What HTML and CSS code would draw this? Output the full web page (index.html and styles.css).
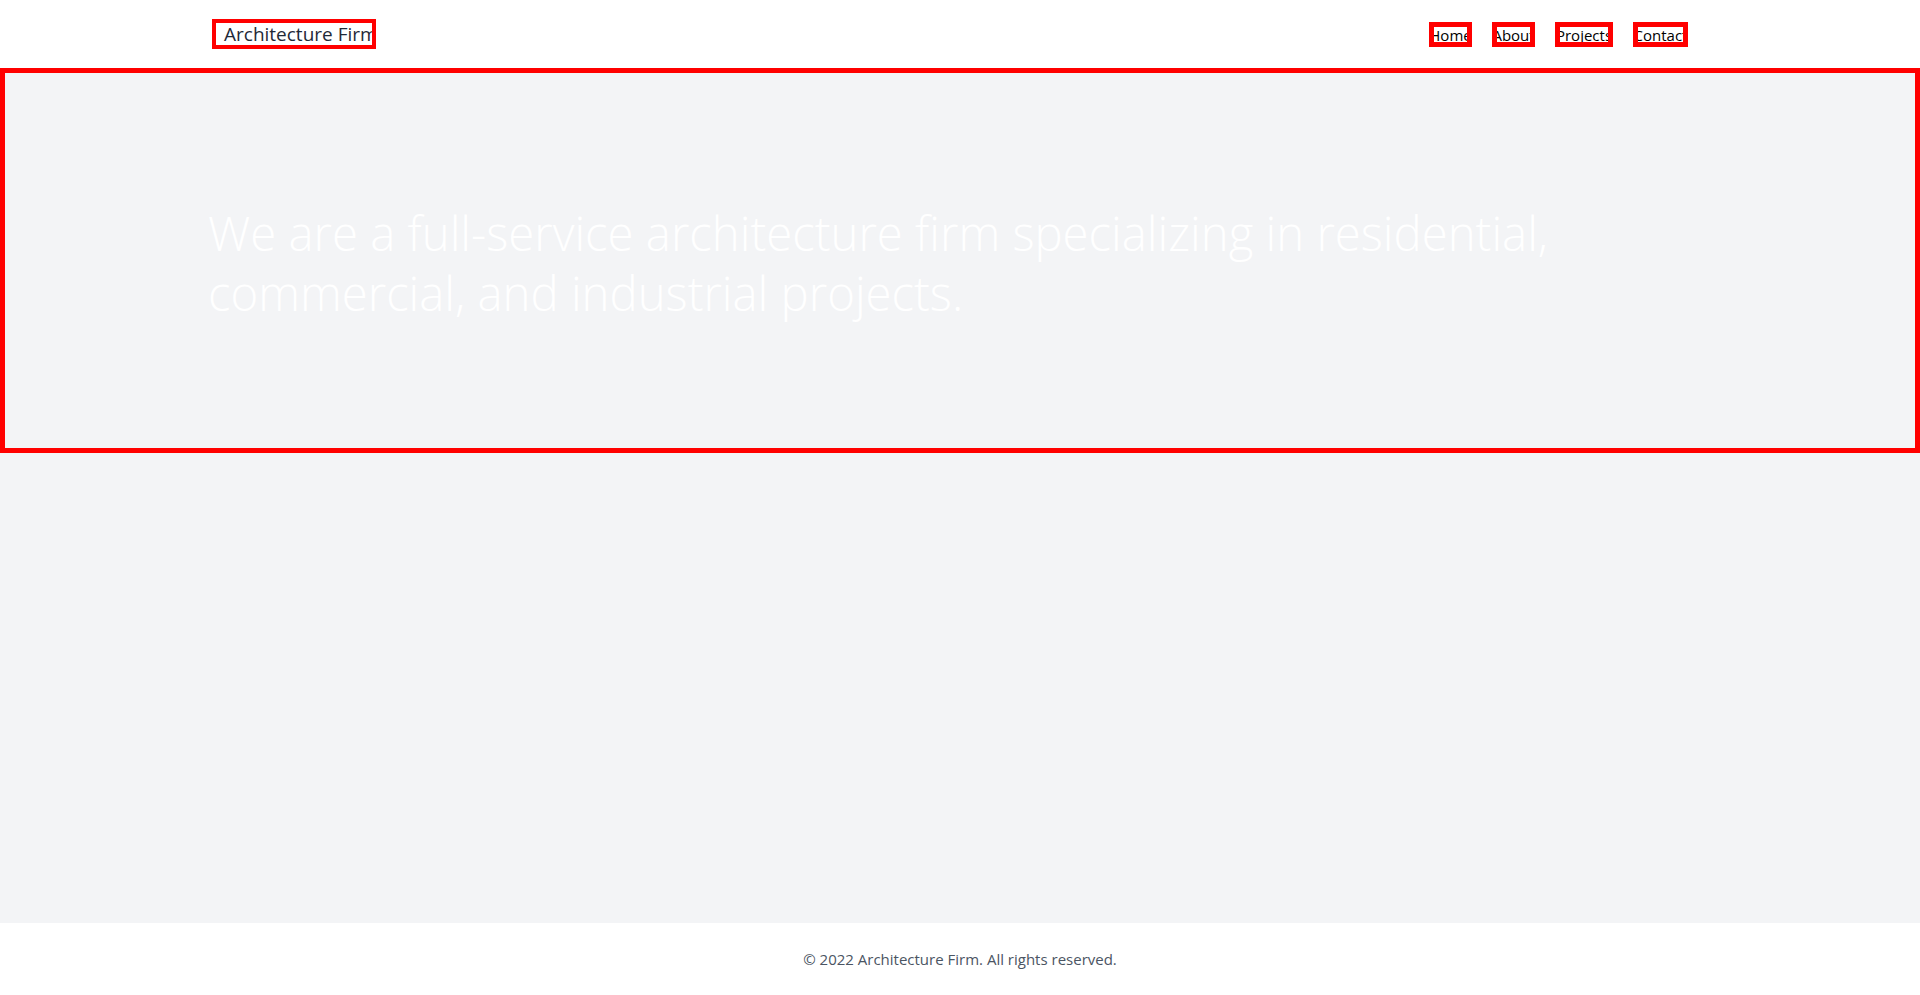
FILE: index.html
```html
<!DOCTYPE html>
<html lang="en">
<head>
<meta charset="utf-8">
<title>Architecture Firm</title>
<link rel="stylesheet" href="styles.css">
</head>
<body>
  <header class="site-header">
    <div class="header-inner">
      <a class="logo" href="#">Architecture Firm</a>
      <nav class="nav">
        <a class="nav-link nav-home" href="#">Home</a>
        <a class="nav-link nav-about" href="#">About</a>
        <a class="nav-link nav-projects" href="#">Projects</a>
        <a class="nav-link nav-contact" href="#">Contact</a>
      </nav>
    </div>
  </header>
  <section class="hero">
    <div class="hero-inner">
      <h1 class="hero-title">We are a full-service architecture firm specializing in residential, commercial, and industrial projects.</h1>
    </div>
  </section>
  <main class="main"></main>
  <footer class="site-footer">
    <p class="footer-text">© 2022 Architecture Firm. All rights reserved.</p>
  </footer>
</body>
</html>
```
FILE: styles.css
```css
* { box-sizing: border-box; }
html, body { margin: 0; padding: 0; }
body {
  font-family: "Open Sans", "Noto Sans", "Liberation Sans", sans-serif;
  background: #f3f4f6;
  min-height: 100vh;
  display: flex;
  flex-direction: column;
}
.site-header {
  background: #ffffff;
  height: 68px;
}
.header-inner {
  width: 1536px;
  margin: 0 auto;
  height: 100%;
  padding: 0 40px 0 20px;
  display: flex;
  align-items: center;
  justify-content: space-between;
}
.logo {
  display: block;
  width: 164px;
  height: 30px;
  border: 4px solid #ff0000;
  padding-left: 8px;
  overflow: hidden;
  white-space: nowrap;
  font-size: 19px;
  line-height: 23px;
  color: #1f2937;
  text-decoration: none;
  background: #fff;
}
.nav {
  display: flex;
  gap: 20px;
  padding-top: 1px;
}
.nav-link {
  display: flex;
  justify-content: center;
  height: 25px;
  border: 5px solid #ff0000;
  overflow: hidden;
  white-space: nowrap;
  font-size: 15px;
  line-height: 16px;
  color: #000;
  text-decoration: none;
  background: #fff;
}
.nav-home { width: 43px; }
.nav-about { width: 43px; }
.nav-projects { width: 58px; }
.nav-contact { width: 55px; }
.hero {
  border: 5px solid #ff0000;
  background: #f3f4f6;
  padding: 130px 0 125px;
}
.hero-inner {
  width: 1536px;
  margin: 0 auto;
  padding: 0 16px;
}
.hero-title {
  margin: 0;
  font-size: 47.3px;
  line-height: 60px;
  font-weight: 350;
  color: #ffffff;
  max-width: 1420px;
}
.main {
  flex: 1;
}
.site-footer {
  background: #ffffff;
  padding: 24px 0;
}
.footer-text {
  margin: 0;
  text-align: center;
  font-size: 15px;
  line-height: 24px;
  color: #4b5563;
}
```
